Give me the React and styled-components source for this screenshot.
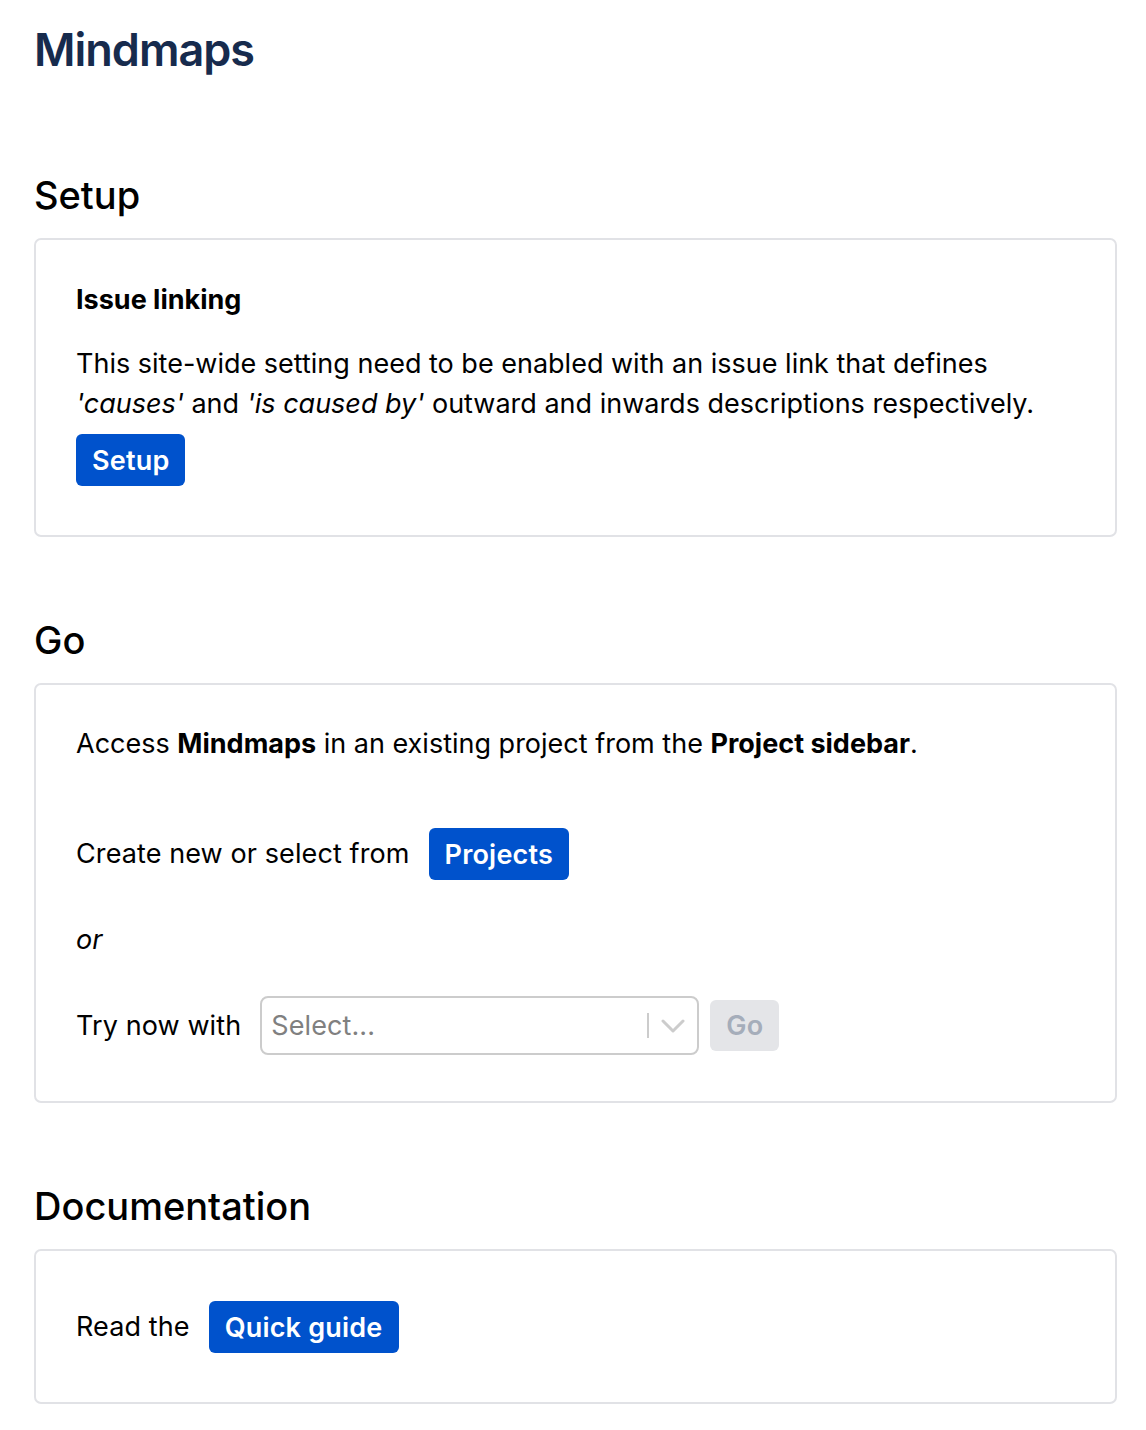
import React from "react";
import styled, { createGlobalStyle } from "styled-components";

const Global = createGlobalStyle`
  html, body { margin: 0; padding: 0; background: #ffffff; }
  body { font-family: Inter, "Noto Sans", "Liberation Sans", sans-serif; color: #000; -webkit-font-smoothing: antialiased; }
  * { box-sizing: border-box; }
`;

const Page = styled.div`
  padding: 22px 29px 26px 34px;
`;

const Title = styled.h1`
  margin: 0 0 97px;
  font-size: 45px;
  line-height: 56px;
  font-weight: 600;
  color: #172b4d;
  letter-spacing: -1px;
`;

const SectionTitle = styled.h2`
  margin: 0 0 23px;
  font-size: 38px;
  line-height: 40px;
  font-weight: 500;
  color: #000;
  letter-spacing: 0;
`;

const Section = styled.section`
  & + & { margin-top: 83px; }
`;

const Card = styled.div`
  border: 2px solid #e1e2e6;
  border-radius: 7px;
  padding: ${(p) => p.$pad || "40px"};
`;

const SubTitle = styled.h4`
  margin: 0 0 24px;
  font-size: 27px;
  line-height: 40px;
  font-weight: 700;
`;

const Text = styled.p`
  margin: 0 0 ${(p) => p.$mb || 0}px;
  font-size: 27px;
  line-height: 40px;
  font-weight: 400;
`;

const Row = styled.div`
  display: flex;
  align-items: center;
  gap: ${(p) => p.$gap || 19}px;
  margin: ${(p) => p.$m || "0"};
  font-size: 27px;
  line-height: 40px;
  letter-spacing: 0.1px;
`;

const Button = styled.button`
  display: inline-flex;
  align-items: center;
  justify-content: center;
  height: 52px;
  padding: 0 16px;
  border: none;
  border-radius: 6px;
  background: #0052cc;
  color: #fff;
  font-family: inherit;
  font-size: 27px;
  font-weight: 600;
  letter-spacing: 0.2px;
  cursor: pointer;
`;

const GoButton = styled(Button)`
  height: 51px;
  padding: 0 16px;
  background: #e4e5e8;
  color: #a5adba;
  cursor: not-allowed;
`;

const SelectBox = styled.div`
  display: flex;
  align-items: center;
  width: 439px;
  height: 59px;
  border: 2px solid #cccccc;
  border-radius: 8px;
  background: #fff;
  padding-left: 9px;
`;

const Placeholder = styled.span`
  flex: 1;
  color: #808080;
  font-size: 27px;
`;

const Separator = styled.span`
  width: 2px;
  height: 25px;
  background: #cccccc;
`;

const Chevron = styled.span`
  display: flex;
  align-items: center;
  justify-content: center;
  width: 48px;
  color: #cccccc;
`;

export default function App() {
  return (
    <>
      <Global />
      <Page>
        <Title>Mindmaps</Title>

        <Section>
          <SectionTitle>Setup</SectionTitle>
          <Card $pad="40px 40px 49px">
            <SubTitle>Issue linking</SubTitle>
            <Text $mb={10}>
              This site-wide setting need to be enabled with an issue link that defines{" "}
              <em>'causes'</em> and <em>'is caused by'</em> outward and inwards descriptions respectively.
            </Text>
            <Button>Setup</Button>
          </Card>
        </Section>

        <Section>
          <SectionTitle>Go</SectionTitle>
          <Card $pad="39px 40px 46px">
            <Text>
              Access <strong>Mindmaps</strong> in an existing project from the <strong>Project sidebar</strong>.
            </Text>
            <Row $m="64px 0 40px">
              <span>Create new or select from</span>
              <Button>Projects</Button>
            </Row>
            <Text $mb={36}>
              <em>or</em>
            </Text>
            <Row>
              <span>Try now with</span>
              <Row $gap={11}>
                <SelectBox>
                  <Placeholder>Select...</Placeholder>
                  <Separator />
                  <Chevron>
                    <svg width="24" height="16" viewBox="0 0 24 16" fill="none">
                      <path d="M2 3 L12 13 L22 3" stroke="currentColor" strokeWidth="3" strokeLinecap="round" strokeLinejoin="round" />
                    </svg>
                  </Chevron>
                </SelectBox>
                <GoButton disabled>Go</GoButton>
              </Row>
            </Row>
          </Card>
        </Section>

        <Section>
          <SectionTitle>Documentation</SectionTitle>
          <Card $pad="50px 40px 49px">
            <Row>
              <span>Read the</span>
              <Button>Quick guide</Button>
            </Row>
          </Card>
        </Section>
      </Page>
    </>
  );
}
